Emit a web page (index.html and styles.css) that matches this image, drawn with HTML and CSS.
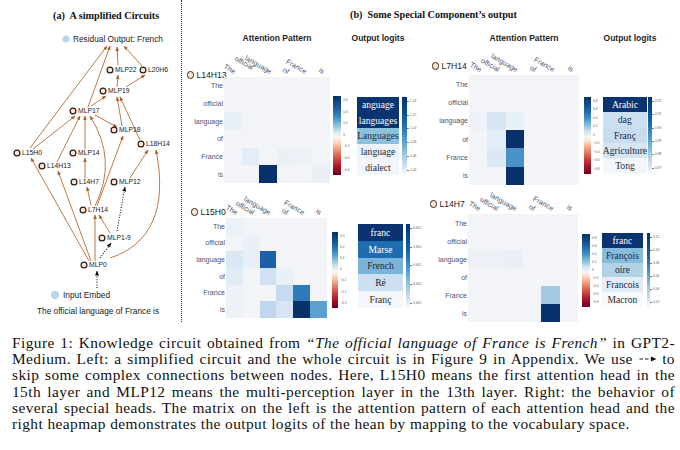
FILE: index.html
```html
<!DOCTYPE html>
<html>
<head>
<meta charset="utf-8">
<link rel="stylesheet" href="styles.css">
</head>
<body>
<div class="figure">
  <div class="left">
    <div class="ltitle">(a)&nbsp; A simplified Circuits</div>
    <svg class="graph" width="180" height="298" viewBox="0 24 180 298">
      <defs>
        <marker id="ab" viewBox="0 0 10 10" refX="9" refY="5" markerWidth="4.5" markerHeight="4.5" markerUnits="userSpaceOnUse" orient="auto"><path class="mb" d="M0,1 L10,5 L0,9 z"/></marker>
        <marker id="ak" viewBox="0 0 10 10" refX="9" refY="5" markerWidth="5" markerHeight="5" markerUnits="userSpaceOnUse" orient="auto"><path class="mk" d="M0,1 L10,5 L0,9 z"/></marker>
      </defs>
      <circle class="bl" cx="66" cy="39" r="3.6"/>
      <text class="gt" x="73" y="42">Residual Output: French</text>

      <line class="e" x1="30" y1="148" x2="107" y2="46"/>
      <line class="e" x1="88" y1="107" x2="110" y2="46"/>
      <line class="e" x1="118" y1="65" x2="117" y2="47"/>
      <line class="e" x1="142" y1="66" x2="124" y2="46"/>
      <line class="e" x1="117" y1="87" x2="118" y2="75"/>
      <line class="e" x1="126" y1="87" x2="145" y2="75"/>
      <line class="e" x1="91" y1="106" x2="106" y2="96"/>
      <line class="e" x1="95" y1="115" x2="117" y2="127"/>
      <line class="e" x1="122" y1="126" x2="117" y2="97"/>
      <line class="e" x1="140" y1="140" x2="120" y2="97"/>
      <line class="e" x1="33" y1="149" x2="75" y2="116"/>
      <line class="e" x1="57" y1="162" x2="80" y2="116"/>
      <line class="e" x1="85" y1="149" x2="85" y2="116"/>
      <path class="e" d="M95 206 Q118 160 90 116"/>
      <line class="e" x1="97" y1="206" x2="123" y2="136"/>
      <line class="e" x1="91" y1="205" x2="87" y2="187"/>
      <line class="e" x1="85" y1="178" x2="85" y2="158"/>
      <line class="e" x1="89" y1="261" x2="31" y2="158"/>
      <line class="e" x1="91" y1="261" x2="58" y2="171"/>
      <line class="e" x1="95" y1="261" x2="95" y2="215"/>
      <line class="e" x1="110" y1="233" x2="99" y2="215"/>
      <line class="e" x1="130" y1="178" x2="148" y2="150"/>
      <path class="e" d="M110 258 C150 245 168 210 156 150"/>

      <line class="d" x1="100" y1="258" x2="111" y2="243"/>
      <line class="d" x1="117" y1="231" x2="125" y2="187"/>
      <line class="d" x1="97" y1="288" x2="97" y2="271"/>

      <circle class="n" cx="110" cy="70" r="2.9"/><text class="t" x="115" y="72.4">MLP22</text>
      <circle class="n" cx="143" cy="70" r="2.9"/><text class="t" x="148" y="72.4">L20H6</text>
      <circle class="n" cx="103" cy="91" r="2.9"/><text class="t" x="108" y="93.4">MLP19</text>
      <circle class="n" cx="73" cy="111" r="2.9"/><text class="t" x="78" y="113.4">MLP17</text>
      <circle class="n" cx="114" cy="130" r="2.9"/><text class="t" x="119" y="132.4">MLP18</text>
      <circle class="n" cx="141" cy="144" r="2.9"/><text class="t" x="146" y="146.4">L18H14</text>
      <circle class="n" cx="17" cy="153" r="2.9"/><text class="t" x="22" y="155.4">L15H0</text>
      <circle class="n" cx="73" cy="153" r="2.9"/><text class="t" x="78" y="155.4">MLP14</text>
      <circle class="n" cx="42" cy="166" r="2.9"/><text class="t" x="47" y="168.4">L14H13</text>
      <circle class="n" cx="74" cy="182" r="2.9"/><text class="t" x="79" y="184.4">L14H7</text>
      <circle class="n" cx="114" cy="182" r="2.9"/><text class="t" x="119" y="184.4">MLP12</text>
      <circle class="n" cx="83" cy="210" r="2.9"/><text class="t" x="88" y="212.4">L7H14</text>
      <circle class="n" cx="102" cy="238" r="2.9"/><text class="t" x="107" y="240.4">MLP1-9</text>
      <circle class="n" cx="84" cy="265" r="2.9"/><text class="t" x="89" y="267.4">MLP0</text>

      <circle class="bl" cx="55" cy="295" r="4.2"/>
      <text class="gt" x="63" y="298">Input Embed</text>
      <text class="gt" x="37" y="314">The official language of France is</text>
    </svg>
  </div>

  <div class="right">
    <div class="rtitle">(b)&nbsp; Some Special Component’s output</div>
    <div class="panels">

      <div class="panel p1">
        <div class="heads"><div class="h h1">Attention Pattern</div><div class="h h2">Output logits</div></div>
        <div class="body">
          <div class="hm">
            <div class="node"><span class="dot"></span>L14H13</div>
            <div class="cols"><div class="cl"><span>The</span></div><div class="cl"><span>official</span></div><div class="cl"><span>language</span></div><div class="cl"><span>of</span></div><div class="cl"><span>France</span></div><div class="cl"><span>is</span></div></div>
            <div class="rows"><span>The</span><span>official</span><span>language</span><span>of</span><span>France</span><span>is</span></div>
            <div class="grid">
              <i style="grid-area:3/1;background:#e9eff7"></i>
              <i style="grid-area:5/2;background:#e4edf7"></i>
              <i style="grid-area:5/4;background:#ebf0f7"></i>
              <i style="grid-area:5/5;background:#eef2f8"></i>
              <i style="grid-area:6/3;background:#08306b"></i>
              <i style="grid-area:6/6;background:#eaeff6"></i>
            </div>
          </div>
          <div class="cb rdbu"><div class="bar"></div><div class="ticks"><span>0.6</span><span>0.4</span><span>0.2</span><span>0</span><span>−0.2</span><span>−0.4</span><span>−0.6</span></div></div>
          <div class="logits">
            <span class="dk" style="background:#0a3370">anguage</span>
            <span class="dk" style="background:#0a3370">languages</span>
            <span style="background:#8cc2de">Languages</span>
            <span style="background:#edf3fa">language</span>
            <span style="background:#f3f6fb">dialect</span>
          </div>
          <div class="cb cb2"><div class="bar"></div><div class="ticks"><span>1.14</span><span>1.12</span><span>1.10</span><span>1.08</span><span>1.06</span><span>1.04</span></div></div>
        </div>
      </div>

      <div class="panel p2">
        <div class="heads"><div class="h h1">Attention Pattern</div><div class="h h2">Output logits</div></div>
        <div class="body">
          <div class="hm">
            <div class="node"><span class="dot"></span>L7H14</div>
            <div class="cols"><div class="cl"><span>The</span></div><div class="cl"><span>official</span></div><div class="cl"><span>language</span></div><div class="cl"><span>of</span></div><div class="cl"><span>France</span></div><div class="cl"><span>is</span></div></div>
            <div class="rows"><span>The</span><span>official</span><span>language</span><span>of</span><span>France</span><span>is</span></div>
            <div class="grid">
              <i style="grid-area:3/1;background:#eef2f8"></i>
              <i style="grid-area:3/2;background:#d8e6f4"></i>
              <i style="grid-area:3/3;background:#e8f0f8"></i>
              <i style="grid-area:4/2;background:#e3edf7"></i>
              <i style="grid-area:4/3;background:#08306b"></i>
              <i style="grid-area:5/2;background:#dce9f5"></i>
              <i style="grid-area:5/3;background:#4a91c7"></i>
              <i style="grid-area:6/3;background:#08306b"></i>
            </div>
          </div>
          <div class="cb rdbu"><div class="bar"></div><div class="ticks"><span>0.8</span><span>0.6</span><span>0.4</span><span>0.2</span><span>0</span><span>−0.2</span><span>−0.4</span><span>−0.6</span><span>−0.8</span></div></div>
          <div class="logits">
            <span class="dk" style="background:#0a3370">Arabic</span>
            <span style="background:#cde0f1">dag</span>
            <span style="background:#c8dcf0">Franç</span>
            <span style="background:#d5e5f3">Agriculture</span>
            <span style="background:#f3f7fc">Tong</span>
          </div>
          <div class="cb cb2"><div class="bar"></div><div class="ticks"><span>0.92</span><span>0.91</span><span>0.90</span><span>0.89</span><span>0.88</span><span>0.87</span></div></div>
        </div>
      </div>

      <div class="panel p3">
        <div class="body">
          <div class="hm">
            <div class="node"><span class="dot"></span>L15H0</div>
            <div class="cols"><div class="cl"><span>The</span></div><div class="cl"><span>official</span></div><div class="cl"><span>language</span></div><div class="cl"><span>of</span></div><div class="cl"><span>France</span></div><div class="cl"><span>is</span></div></div>
            <div class="rows"><span>The</span><span>official</span><span>language</span><span>of</span><span>France</span><span>is</span></div>
            <div class="grid">
              <i style="grid-area:1/1;background:#ebf1f8"></i>
              <i style="grid-area:2/2;background:#e9f0f8"></i>
              <i style="grid-area:3/1;background:#dae7f4"></i>
              <i style="grid-area:3/2;background:#e8eff8"></i>
              <i style="grid-area:3/3;background:#1c60a8"></i>
              <i style="grid-area:4/1;background:#e1ebf6"></i>
              <i style="grid-area:4/3;background:#d0e2f2"></i>
              <i style="grid-area:4/4;background:#e8f0f8"></i>
              <i style="grid-area:5/1;background:#eef2f8"></i>
              <i style="grid-area:5/4;background:#c6dbef"></i>
              <i style="grid-area:5/5;background:#2d7aba"></i>
              <i style="grid-area:6/1;background:#eef2f8"></i>
              <i style="grid-area:6/3;background:#bed7ec"></i>
              <i style="grid-area:6/4;background:#d5e5f3"></i>
              <i style="grid-area:6/5;background:#08306b"></i>
              <i style="grid-area:6/6;background:#5aa0d0"></i>
            </div>
          </div>
          <div class="cb rdbu"><div class="bar"></div><div class="ticks"><span>0.3</span><span>0.2</span><span>0.1</span><span>0</span><span>−0.1</span><span>−0.2</span><span>−0.3</span></div></div>
          <div class="logits">
            <span class="dk" style="background:#0a3370">franc</span>
            <span class="dk" style="background:#1f6cb0">Marse</span>
            <span style="background:#7ab4d9">French</span>
            <span style="background:#cde0f1">Ré</span>
            <span style="background:#f4f8fc">Franç</span>
          </div>
          <div class="cb cb2"><div class="bar"></div><div class="ticks"><span>0.655</span><span>0.650</span><span>0.645</span><span>0.640</span><span>0.635</span></div></div>
        </div>
      </div>

      <div class="panel p4">
        <div class="body">
          <div class="hm">
            <div class="node"><span class="dot"></span>L14H7</div>
            <div class="cols"><div class="cl"><span>The</span></div><div class="cl"><span>official</span></div><div class="cl"><span>language</span></div><div class="cl"><span>of</span></div><div class="cl"><span>France</span></div><div class="cl"><span>is</span></div></div>
            <div class="rows"><span>The</span><span>official</span><span>language</span><span>of</span><span>France</span><span>is</span></div>
            <div class="grid">
              <i style="grid-area:3/1;background:#edf1f7"></i>
              <i style="grid-area:3/2;background:#edf1f7"></i>
              <i style="grid-area:3/3;background:#e9eff7"></i>
              <i style="grid-area:5/5;background:#a3c9e3"></i>
              <i style="grid-area:6/5;background:#08306b"></i>
            </div>
          </div>
          <div class="cb rdbu"><div class="bar"></div><div class="ticks"><span>0.8</span><span>0.6</span><span>0.4</span><span>0.2</span><span>0</span><span>−0.2</span><span>−0.4</span><span>−0.6</span><span>−0.8</span></div></div>
          <div class="logits">
            <span class="dk" style="background:#0a3370">franc</span>
            <span style="background:#87bddc">François</span>
            <span style="background:#b2d2e8">oire</span>
            <span style="background:#e3edf7">Francois</span>
            <span style="background:#f7fafd">Macron</span>
          </div>
          <div class="cb cb2"><div class="bar"></div><div class="ticks"><span>0.12</span><span>0.10</span><span>0.08</span><span>0.06</span><span>0.04</span><span>0.02</span></div></div>
        </div>
      </div>

    </div>
  </div>
</div>

<div class="caption">
  <div class="j">Figure 1: Knowledge circuit obtained from <em>“The official language of France is French”</em> in GPT2-</div>
  <div class="j">Medium. Left: a simplified circuit and the whole circuit is in Figure 9 in Appendix. We use <svg class="darr" width="18" height="8" viewBox="0 0 18 8"><line class="da" x1="0.5" y1="4" x2="13" y2="4"/><path class="dah" d="M12 1.6 L17.5 4 L12 6.4 z"/></svg> to</div>
  <div class="j">skip some complex connections between nodes. Here, L15H0 means the first attention head in the</div>
  <div class="j">15th layer and MLP12 means the multi-perception layer in the 13th layer. Right: the behavior of</div>
  <div class="j">several special heads. The matrix on the left is the attention pattern of each attention head and the</div>
  <div>right heapmap demonstrates the output logits of the hean by mapping to the vocabulary space.</div>
</div>
</body>
</html>
```

FILE: styles.css
```css
* { box-sizing: border-box; }

body {
  margin: 0;
  width: 680px;
  height: 450px;
  overflow: hidden;
  background: #ffffff;
  font-family: "Liberation Sans", Arial, sans-serif;
  color: #222222;
}

.figure {
  display: flex;
  align-items: flex-start;
  height: 335px;
}

/* ---------- left: circuit graph ---------- */
.left {
  width: 181.5px;
  height: 322px;
  flex-shrink: 0;
  border-right: 1.5px dotted #333333;
}

.ltitle {
  height: 24px;
  padding: 10px 0 0 53px;
  font: bold 10.2px/12px "Liberation Serif", "Times New Roman", serif;
  white-space: nowrap;
  color: #111111;
}

.graph { display: block; }

.e {
  stroke: #b36a32;
  stroke-width: 0.9;
  fill: none;
  marker-end: url(#ab);
}

.d {
  stroke: #111111;
  stroke-width: 1.1;
  stroke-dasharray: 1 1.6;
  fill: none;
  marker-end: url(#ak);
}

.mb { fill: #a8602c; }
.mk { fill: #111111; }

.n {
  fill: #fde6d8;
  stroke: #2e1b10;
  stroke-width: 1.2;
}

.t {
  font-family: "Liberation Sans", Arial, sans-serif;
  font-size: 6.8px;
  fill: #1a1a1a;
}

.gt {
  font-family: "Liberation Sans", Arial, sans-serif;
  font-size: 8.3px;
  fill: #1a1a1a;
}

.bl { fill: #b9d4ec; }

/* ---------- right: component panels ---------- */
.right {
  flex: 1;
  display: flex;
  flex-direction: column;
}

.rtitle {
  height: 21px;
  padding: 9px 0 0 168.5px;
  font: bold 10.2px/12px "Liberation Serif", "Times New Roman", serif;
  white-space: nowrap;
  color: #111111;
}

.panels {
  display: grid;
  grid-template-columns: 247.5px 1fr;
  grid-template-rows: 169px 1fr;
}

.p1 { --lab: 42.5px; --cw: 17.7px; --ch: 17.7px; --band: 27px; --npl: 5px; --nmb: -3px;
      --g1: 3px; --cbw: 8px; --cbt: 46px; --cbh: 79px; --g2: 15.8px;
      --lw: 42px; --lt: 47px; --lh: 78px; --g3: 3px; --c2w: 5px; --hg: 26.8px; --hw: 42px; }
.p2 { --lab: 40px; --cw: 18.33px; --ch: 18.33px; --band: 25px; --npl: 2.5px; --nmb: 4px;
      --g1: 5px; --cbw: 7px; --cbt: 47px; --cbh: 77px; --g2: 12px;
      --lw: 44px; --lt: 47px; --lh: 76px; --g3: 1px; --c2w: 4px; --hg: 24px; --hw: 54px; }
.p3 { --lab: 44.5px; --cw: 16.83px; --ch: 16.67px; --band: 28px; --npl: 9px; --nmb: 1px;
      --g1: 5px; --cbw: 6px; --cbt: 42px; --cbh: 76px; --g2: 20px;
      --lw: 45px; --lt: 34px; --lh: 84px; --g3: 3px; --c2w: 4px; }
.p4 { --lab: 39px; --cw: 18.33px; --ch: 18px; --band: 24px; --npl: 0.5px; --nmb: 5px;
      --g1: 4px; --cbw: 8px; --cbt: 44px; --cbh: 73px; --g2: 12px;
      --lw: 41px; --lt: 43px; --lh: 74px; --g3: 4px; --c2w: 3px; }

.heads {
  display: flex;
  height: 29px;
  padding-top: 12px;
  font: bold 8.5px/10px "Liberation Sans", Arial, sans-serif;
  color: #1e1e1e;
}

.h {
  display: flex;
  justify-content: center;
  white-space: nowrap;
}

.h1 { margin-left: var(--lab); width: calc(var(--cw) * 6); }
.h2 { margin-left: var(--hg); width: var(--hw); }

.body {
  display: flex;
  align-items: flex-start;
}

.hm {
  display: grid;
  grid-template-columns: var(--lab) calc(var(--cw) * 6);
  grid-template-rows: var(--band) calc(var(--ch) * 6);
}

.node {
  display: flex;
  align-items: center;
  align-self: end;
  padding-left: var(--npl);
  margin-bottom: var(--nmb);
  font-size: 8.6px;
  line-height: 10px;
  white-space: nowrap;
  color: #1a1a1a;
}

.dot {
  width: 7.5px;
  height: 7.5px;
  flex-shrink: 0;
  margin-right: 2.5px;
  border: 1.3px solid #3b2314;
  border-radius: 50%;
  background: #fbe5d6;
}

.cols {
  display: grid;
  grid-template-columns: repeat(6, var(--cw));
}

.cl {
  display: flex;
  justify-content: flex-end;
  align-items: flex-end;
}

.cl span {
  flex-shrink: 0;
  white-space: nowrap;
  font-size: 7.2px;
  line-height: 7px;
  color: #4d5470;
  margin-right: calc(var(--cw) / 2 - 1px);
  margin-bottom: 2px;
  transform-origin: 100% 100%;
  transform: rotate(30deg);
}

.p1 .cl:nth-child(2) span { margin-bottom: 6px; }

.rows {
  display: grid;
  grid-template-rows: repeat(6, var(--ch));
}

.rows span {
  display: flex;
  align-items: center;
  justify-content: flex-end;
  padding-right: 1px;
  font-size: 7px;
  color: #4d5470;
  white-space: nowrap;
}

.grid {
  display: grid;
  grid-template-columns: repeat(6, var(--cw));
  grid-template-rows: repeat(6, var(--ch));
  background: #f3f4f8;
}

.cb {
  display: flex;
  margin-left: var(--g1);
  margin-top: var(--cbt);
  height: var(--cbh);
}

.bar { width: var(--cbw); }

.rdbu .bar {
  background: linear-gradient(#053061, #2166ac 18%, #4393c3 28%, #92c5de 38%, #d1e5f0 45%,
              #f7f7f7 52%, #fddbc7 58%, #f4a582 66%, #d6604d 76%, #b2182b 88%, #67001f);
}

.ticks {
  width: var(--g2);
  display: flex;
  flex-direction: column;
  justify-content: space-between;
  padding: 3px 0 3px 2px;
  font-size: 3.3px;
  line-height: 3.3px;
  color: #666666;
  white-space: nowrap;
}

.logits {
  display: flex;
  flex-direction: column;
  width: var(--lw);
  margin-top: var(--lt);
  height: var(--lh);
}

.logits span {
  flex: 1;
  display: flex;
  align-items: center;
  justify-content: center;
  font: 9.6px "Liberation Serif", "Times New Roman", serif;
  white-space: nowrap;
  color: #1f2a36;
}

.logits .dk { color: #ffffff; }

.cb2 {
  margin-left: var(--g3);
  margin-top: var(--lt);
  height: var(--lh);
}

.cb2 .bar {
  width: var(--c2w);
  background: linear-gradient(#08306b, #08519c 20%, #2171b5 38%, #4292c6 50%, #6baed6 62%,
              #9ecae1 74%, #c6dbef 86%, #f7fbff);
}

.cb2 .ticks {
  width: 16px;
  padding-left: 0;
}

.cb2 .ticks span::before {
  content: "";
  display: inline-block;
  width: 2px;
  height: 0.5px;
  margin-right: 1px;
  vertical-align: middle;
  background: #777777;
}

/* ---------- caption ---------- */
.caption {
  padding: 0 5px 0 12px;
  font: 15.4px/16.2px "Liberation Serif", "Times New Roman", serif;
  letter-spacing: 0.42px;
  color: #111111;
}

.caption .j {
  text-align: justify;
  text-align-last: justify;
}

.darr { vertical-align: 1px; }

.da {
  stroke: #111111;
  stroke-width: 1;
  stroke-dasharray: 3.5 2;
}

.dah { fill: #111111; }
```
